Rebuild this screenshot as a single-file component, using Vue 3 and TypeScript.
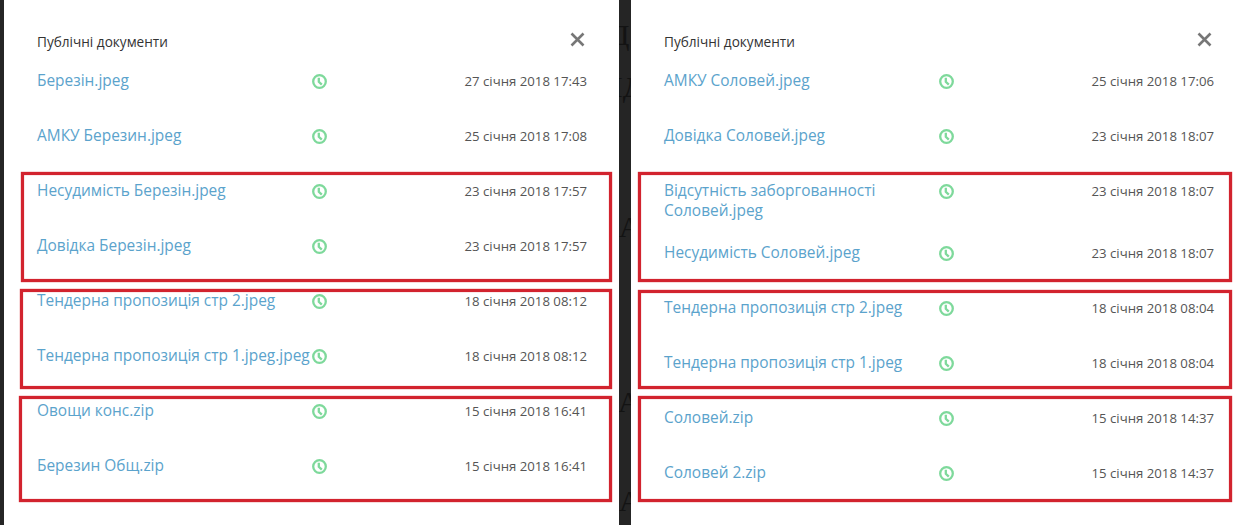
<script setup lang="ts">
  interface Doc {
    name: string;
    date: string;
  }

  interface Panel {
    id: string;
    docs: Doc[];
  }

  interface Box {
    left: number;
    top: number;
    width: number;
    height: number;
  }

  interface Ghost {
    text: string;
    left: number;
    top: number;
  }

  const panels: Panel[] = [
    {
      id: 'left',
      docs: [
        { name: 'Березін.jpeg', date: '27 січня 2018 17:43' },
        { name: 'АМКУ Березин.jpeg', date: '25 січня 2018 17:08' },
        { name: 'Несудимість Березін.jpeg', date: '23 січня 2018 17:57' },
        { name: 'Довідка Березін.jpeg', date: '23 січня 2018 17:57' },
        { name: 'Тендерна пропозиція стр 2.jpeg', date: '18 січня 2018 08:12' },
        { name: 'Тендерна пропозиція стр 1.jpeg.jpeg', date: '18 січня 2018 08:12' },
        { name: 'Овощи конс.zip', date: '15 січня 2018 16:41' },
        { name: 'Березин Общ.zip', date: '15 січня 2018 16:41' },
      ],
    },
    {
      id: 'right',
      docs: [
        { name: 'АМКУ Соловей.jpeg', date: '25 січня 2018 17:06' },
        { name: 'Довідка Соловей.jpeg', date: '23 січня 2018 18:07' },
        { name: 'Відсутність заборгованності Соловей.jpeg', date: '23 січня 2018 18:07' },
        { name: 'Несудимість Соловей.jpeg', date: '23 січня 2018 18:07' },
        { name: 'Тендерна пропозиція стр 2.jpeg', date: '18 січня 2018 08:04' },
        { name: 'Тендерна пропозиція стр 1.jpeg', date: '18 січня 2018 08:04' },
        { name: 'Соловей.zip', date: '15 січня 2018 14:37' },
        { name: 'Соловей 2.zip', date: '15 січня 2018 14:37' },
      ],
    },
  ];

  // red hand-drawn annotation frames, on top of the screenshot
  const marks: Box[] = [
    { left: 21, top: 172, width: 591, height: 110 },
    { left: 20, top: 289, width: 592, height: 100 },
    { left: 19, top: 396, width: 593, height: 106 },
    { left: 638, top: 172, width: 594, height: 110 },
    { left: 638, top: 290, width: 594, height: 99 },
    { left: 638, top: 396, width: 594, height: 106 },
  ];

  // bits of the page text that show through the gap between the two dialogs
  const ghosts: Ghost[] = [
    { text: 'Д', left: 609, top: 18 },
    { text: 'НД', left: 601, top: 70 },
    { text: 'А"', left: 619, top: 210 },
    { text: 'А', left: 618, top: 385 },
    { text: 'А"', left: 619, top: 484 },
  ];

  function boxStyle(m: Box) {
    return {
      left: `${m.left}px`,
      top: `${m.top}px`,
      width: `${m.width}px`,
      height: `${m.height}px`,
    };
  }

  function ghostStyle(g: Ghost) {
    return { left: `${g.left}px`, top: `${g.top}px` };
  }
</script>

<template>
  <div class="page">
    <span
      v-for="(ghost, i) in ghosts"
      :key="i"
      class="ghost"
      :style="ghostStyle(ghost)"
    >{{ ghost.text }}</span>
    <section
      v-for="panel in panels"
      :key="panel.id"
      class="panel"
      :class="`panel-${panel.id}`"
    >
      <header class="panel-header">
        <h3>Публічні документи</h3>
        <button class="close-button" aria-label="Закрити">
          <svg width="17" height="17" viewBox="0 0 17 17">
            <path d="M2.5 2.5 L14.5 14.5 M14.5 2.5 L2.5 14.5" />
          </svg>
        </button>
      </header>
      <ul class="doc-list">
        <li
          v-for="doc in panel.docs"
          :key="doc.name"
          class="doc-row"
        >
          <a class="doc-name" href="#">{{ doc.name }}</a>
          <svg class="doc-clock" width="15" height="15" viewBox="0 0 15 15">
            <circle cx="7.5" cy="7.5" r="6.3" />
            <path d="M6.8 3.8 V7.8 L9.8 10.6" />
          </svg>
          <span class="doc-date">{{ doc.date }}</span>
        </li>
      </ul>
    </section>
    <div
      v-for="(mark, i) in marks"
      :key="i"
      class="mark"
      :style="boxStyle(mark)"
    />
  </div>
</template>

<style scoped>
  .page {
    position: relative;
    display: flex;
    height: 525px;
    padding-left: 4px;
    box-sizing: border-box;
    overflow: hidden;
    background: #252525;
    font-family: 'Open Sans', sans-serif;
  }

  .ghost {
    position: absolute;
    font-family: 'Liberation Serif', serif;
    font-size: 30px;
    line-height: 34px;
    color: #131313;
  }

  .panel {
    position: relative;
    background: #fff;
    box-sizing: border-box;
    padding-top: 32px;
    padding-left: 33px;
  }

  .panel-left {
    width: 615px;
    margin-right: 12px;
    padding-right: 32px;
  }

  .panel-right {
    width: 614px;
    padding-right: 31px;
  }

  .panel-header {
    display: flex;
    justify-content: space-between;
    height: 38px;
  }

  .panel-header h3 {
    margin: 0;
    font-size: 13.6px;
    font-weight: 400;
    line-height: 20px;
    color: #333;
  }

  .close-button {
    width: 17px;
    height: 17px;
    margin: -1px 1px 0 0;
    padding: 0;
    border: none;
    background: transparent;
    cursor: pointer;
  }

  .close-button svg {
    display: block;
  }

  .close-button path {
    fill: none;
    stroke: #777;
    stroke-width: 2.6;
  }

  .doc-list {
    margin: 0;
    padding: 0;
    list-style: none;
  }

  .doc-row {
    display: grid;
    grid-template-columns: 275px 15px 1fr;
    align-items: start;
    box-sizing: border-box;
    min-height: 55px;
    padding-bottom: 22px;
  }

  .doc-name {
    font-size: 15.45px;
    line-height: 20px;
    color: #5ba3cc;
    text-decoration: none;
  }

  .doc-clock {
    margin-top: 4px;
  }

  .doc-clock circle,
  .doc-clock path {
    fill: none;
    stroke: #7ed99b;
    stroke-width: 2.3;
  }

  .doc-date {
    font-size: 13.2px;
    line-height: 22px;
    color: #555;
    text-align: right;
  }

  .mark {
    position: absolute;
    box-sizing: border-box;
    border: 3px solid #d2232e;
    box-shadow: 0 0 1px #d2232e, inset 0 0 1px #d2232e;
    pointer-events: none;
  }
</style>

<style>
  html,
  body {
    margin: 0;
    background: #252525;
  }
</style>
